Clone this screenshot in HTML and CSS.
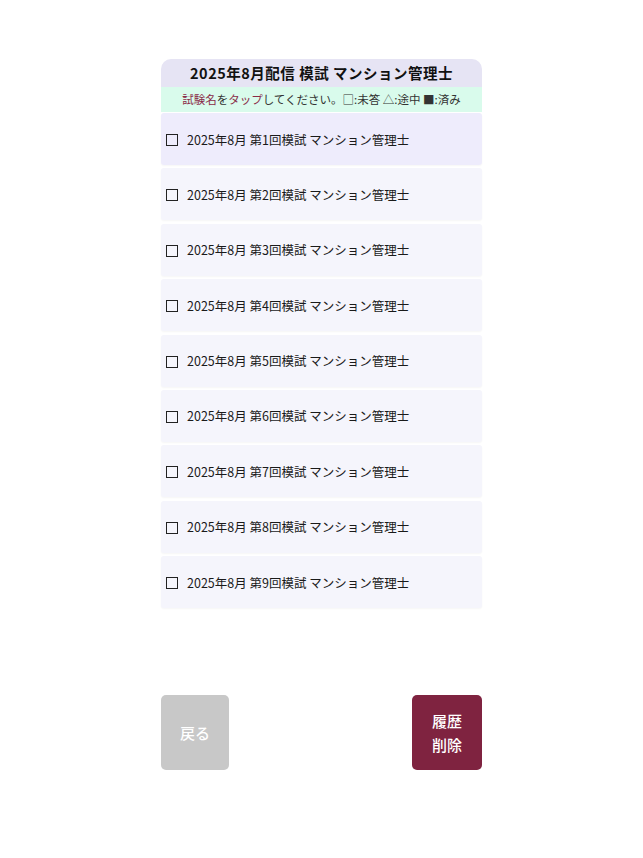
FILE: index.html
```html
<!DOCTYPE html>
<html lang="ja">
<head>
  <meta charset="UTF-8">
  <title>2025年8月配信 模試 マンション管理士</title>
  <link rel="stylesheet" href="styles.css">
</head>
<body>
  <div class="page">
    <div class="panel">
      <h1 class="title">2025年8月配信 模試 マンション管理士</h1>
      <p class="hint"><span class="accent">試験名</span>を<span class="accent">タップ</span>してください。□:未答 △:途中 ■:済み</p>
      <ul class="exam-list">
        <li class="exam selected"><span class="mark"></span>2025年8月 第1回模試 マンション管理士</li>
        <li class="exam"><span class="mark"></span>2025年8月 第2回模試 マンション管理士</li>
        <li class="exam"><span class="mark"></span>2025年8月 第3回模試 マンション管理士</li>
        <li class="exam"><span class="mark"></span>2025年8月 第4回模試 マンション管理士</li>
        <li class="exam"><span class="mark"></span>2025年8月 第5回模試 マンション管理士</li>
        <li class="exam"><span class="mark"></span>2025年8月 第6回模試 マンション管理士</li>
        <li class="exam"><span class="mark"></span>2025年8月 第7回模試 マンション管理士</li>
        <li class="exam"><span class="mark"></span>2025年8月 第8回模試 マンション管理士</li>
        <li class="exam"><span class="mark"></span>2025年8月 第9回模試 マンション管理士</li>
      </ul>
    </div>

    <div class="actions">
      <button class="btn back">戻る</button>
      <button class="btn clear">履歴<br>削除</button>
    </div>
  </div>
</body>
</html>
```

FILE: styles.css
```css
:root {
  --head-bg: #e6e4f4;
  --hint-bg: #d9fbec;
  --item-bg: #f5f5fc;
  --item-selected: #eeecfc;
  --accent: #8a2b48;
  --danger: #7f2340;
  --muted: #c8c8c8;
  --text: #1a1a1a;
}
* { box-sizing: border-box; }
body {
  margin: 0;
  background: #ffffff;
  font-family: "Noto Sans CJK JP", "Noto Sans", sans-serif;
  color: var(--text);
}
.page {
  width: 321px;
  margin: 0 auto;
  padding-top: 59px;
}
.title {
  margin: 0;
  height: 28px;
  line-height: 28px;
  background: var(--head-bg);
  border-radius: 10px 10px 0 0;
  font-size: 14.5px;
  font-weight: 700;
  text-align: center;
  letter-spacing: 0.5px;
  color: #111;
}
.hint {
  margin: 0;
  height: 25px;
  line-height: 25px;
  background: var(--hint-bg);
  font-size: 11.5px;
  text-align: center;
  color: #333;
}
.accent { color: var(--accent); }
.exam-list {
  list-style: none;
  margin: 1px 0 0;
  padding: 0;
  display: flex;
  flex-direction: column;
  gap: 3.4px;
}
.exam {
  height: 52px;
  display: flex;
  align-items: center;
  padding-left: 5px;
  background: var(--item-bg);
  border-radius: 3px;
  box-shadow: 0 1px 2px rgba(0,0,0,0.04);
  font-size: 12.5px;
}
.exam.selected { background: var(--item-selected); }
.mark {
  width: 12px;
  height: 12px;
  margin: 2px 9px 0 0;
  border: 1.5px solid #222;
  flex-shrink: 0;
}
.actions {
  display: flex;
  justify-content: space-between;
  margin-top: 87px;
}
.btn {
  width: 68px;
  height: 75px;
  border: none;
  border-radius: 5px;
  color: #fff;
  font-family: inherit;
  font-size: 15px;
  font-weight: 500;
  line-height: 24px;
  padding: 0;
}
.back { background: var(--muted); }
.clear {
  width: 70px;
  background: var(--danger);
}
```
